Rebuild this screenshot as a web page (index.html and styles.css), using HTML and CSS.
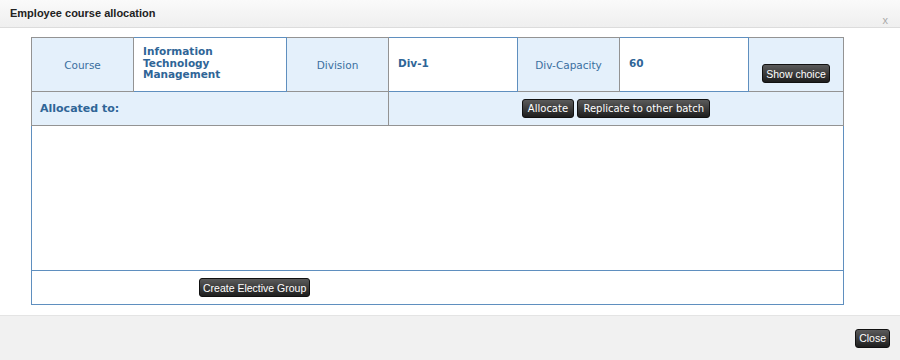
FILE: index.html
```html
<!DOCTYPE html>
<html lang="en">
<head>
    <meta charset="UTF-8">
    <title>Employee course allocation</title>
    <link rel="stylesheet" href="styles.css">
</head>
<body>
    <div class="dialog">
        <div class="dialog-header">
            <span class="dialog-title">Employee course allocation</span>
            <span class="dialog-close">x</span>
        </div>
        <div class="dialog-body">
            <table class="alloc-table">
                <colgroup>
                    <col style="width: 102px">
                    <col style="width: 153px">
                    <col style="width: 102px">
                    <col style="width: 129px">
                    <col style="width: 102px">
                    <col style="width: 129px">
                    <col style="width: 95px">
                </colgroup>
                <tr class="info-row">
                    <td class="label">Course</td>
                    <td class="value">Information Technology Management</td>
                    <td class="label">Division</td>
                    <td class="value">Div-1</td>
                    <td class="label">Div-Capacity</td>
                    <td class="value">60</td>
                    <td class="label action"><button class="btn btn-plain">Show choice</button></td>
                </tr>
                <tr class="alloc-row">
                    <td colspan="3" class="alloc-title">Allocated to:</td>
                    <td colspan="4" class="alloc-actions">
                        <button class="btn">Allocate</button>
                        <button class="btn">Replicate to other batch</button>
                    </td>
                </tr>
                <tr class="list-row">
                    <td colspan="7"></td>
                </tr>
                <tr class="footer-row">
                    <td colspan="7"><button class="btn btn-plain">Create Elective Group</button></td>
                </tr>
            </table>
        </div>
        <div class="dialog-footer">
            <button class="btn btn-plain">Close</button>
        </div>
    </div>
</body>
</html>
```

FILE: styles.css
```css
body {
    margin: 0;
    font-family: "DejaVu Sans", Verdana, sans-serif;
    background-color: #fff;
}
.dialog {
    width: 900px;
    height: 360px;
    display: flex;
    flex-direction: column;
}
.dialog-header {
    height: 28px;
    box-sizing: border-box;
    display: flex;
    justify-content: space-between;
    padding: 7px 12px 0 10px;
    background: linear-gradient(#fafafa, #efefef);
    border-bottom: 1px solid #dcdcdc;
}
.dialog-title {
    font-family: "Liberation Sans", Arial, sans-serif;
    font-size: 11px;
    font-weight: bold;
    color: #222;
}
.dialog-close {
    font-family: "Liberation Sans", Arial, sans-serif;
    font-size: 11px;
    color: #aaa;
    padding-top: 7px;
}
.dialog-body {
    flex: 1;
    padding: 9px 0 0 31px;
}
.alloc-table {
    width: 812px;
    border-collapse: collapse;
    table-layout: fixed;
    font-size: 10.5px;
    color: #3a6f9f;
}
.alloc-table td {
    padding: 0;
}
.info-row {
    height: 54px;
}
.info-row td {
    border: 1px solid #939393;
    vertical-align: middle;
}
.info-row .label {
    background-color: #e4f0fb;
    text-align: center;
}
.info-row .value {
    background-color: #fff;
    border-color: #5f8fbf;
    font-size: 10.5px;
    font-weight: bold;
    color: #2f6597;
    padding: 0 9px 2px 9px;
    line-height: 11.5px;
}
.info-row .action {
    vertical-align: bottom;
    padding-bottom: 8px;
}
.alloc-row {
    height: 34px;
}
.alloc-row td {
    background-color: #e4f0fb;
    border: 1px solid #939393;
}
.alloc-title {
    font-size: 11px;
    font-weight: bold;
    color: #2f6597;
    padding-left: 8px !important;
}
.alloc-actions {
    text-align: center;
}
.list-row {
    height: 145px;
}
.list-row td {
    border: 1px solid #5f8fbf;
    border-top-color: #939393;
}
.footer-row {
    height: 34px;
}
.footer-row td {
    border: 1px solid #5f8fbf;
    padding-left: 167px !important;
}
.btn {
    font-family: "DejaVu Sans", Verdana, sans-serif;
    font-size: 10px;
    color: #fff;
    background: linear-gradient(#5a5a5a, #1e1e1e);
    border: 1px solid #111;
    border-radius: 3px;
    padding: 2px 5px;
    height: 19px;
    cursor: pointer;
}
.btn-plain {
    font-family: "Liberation Sans", Arial, sans-serif;
    font-size: 10.5px;
    padding: 2px 3px;
}
.dialog-footer {
    height: 45px;
    box-sizing: border-box;
    display: flex;
    justify-content: flex-end;
    align-items: center;
    padding-right: 10px;
    background-color: #f1f1f1;
    border-top: 1px solid #e4e4e4;
}
```
